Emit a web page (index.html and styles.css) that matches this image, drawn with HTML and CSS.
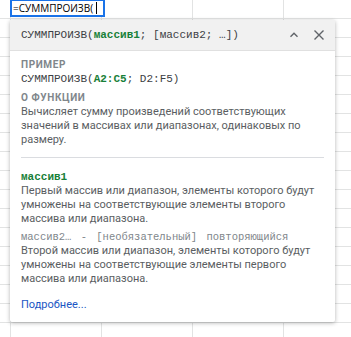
FILE: index.html
```html
<!DOCTYPE html>
<html lang="ru">
<head>
    <meta charset="UTF-8">
    <title>СУММПРОИЗВ</title>
    <link rel="stylesheet" href="styles.css">
</head>
<body>

    <!-- Sheet with an open formula editor -->
    <div class="sheet">
        <div class="cell-editor">=СУММПРОИЗВ(<span class="caret"></span></div>

        <!-- Function help popup -->
        <div class="help-popup">
            <div class="help-header">
                <div class="signature">СУММПРОИЗВ(<b class="arg">массив1</b>; [массив2; …])</div>
                <div class="header-icons">
                    <svg width="12" height="12" viewBox="0 0 12 12"><path d="M2.5 7.8 L6 4.3 L9.5 7.8" fill="none" stroke="#5f6368" stroke-width="1.4"/></svg>
                    <svg width="14" height="14" viewBox="0 0 14 14"><path d="M2.5 2.5 L11.5 11.5 M11.5 2.5 L2.5 11.5" fill="none" stroke="#5f6368" stroke-width="1.4"/></svg>
                </div>
            </div>

            <div class="help-body">
                <div class="label">Пример</div>
                <div class="mono">СУММПРОИЗВ(<b class="arg">A2:C5</b>; D2:F5)</div>
                <div class="label">О функции</div>
                <p class="desc">Вычисляет сумму произведений соответствующих значений в массивах или диапазонах, одинаковых по размеру.</p>

                <hr class="divider">

                <div class="mono arg-name"><b class="arg">массив1</b></div>
                <p class="desc">Первый массив или диапазон, элементы которого будут умножены на соответствующие элементы второго массива или диапазона.</p>

                <div class="mono optional">массив2… - [необязательный] повторяющийся</div>
                <p class="desc">Второй массив или диапазон, элементы которого будут умножены на соответствующие элементы первого массива или диапазона.</p>

                <a class="more" href="#">Подробнее...</a>
            </div>
        </div>
    </div>

</body>
</html>
```

FILE: styles.css
```css
/* Page + spreadsheet grid */
body {
    margin: 0;
    font-family: Roboto, 'Liberation Sans', sans-serif;
    background-color: #ffffff;
    background-image:
        linear-gradient(to right, #e2e3e3 1px, transparent 1px),
        linear-gradient(to bottom, #e2e3e3 1px, transparent 1px);
    background-size: 91px 100%, 100% 19px;
    background-position: 10px 0, 0 18px;
    height: 337px;
    overflow: hidden;
}

.sheet {
    padding-left: 10px;
}

/* Cell in edit mode */
.cell-editor {
    box-sizing: border-box;
    width: 95px;
    height: 18px;
    margin-top: -1px;
    border: 2px solid #1a73e8;
    background: #ffffff;
    font-family: 'Open Sans', 'Liberation Sans', sans-serif;
    font-size: 10px;
    line-height: 14px;
    padding-left: 1px;
    color: #000;
    white-space: nowrap;
}

.caret {
    display: inline-block;
    width: 1px;
    height: 12px;
    background: #000;
    vertical-align: -2px;
    margin-left: 3px;
}

/* Help popup */
.help-popup {
    width: 325px;
    margin-top: 3px;
    background: #ffffff;
    border-radius: 2px;
    box-shadow: 0 1px 4px rgba(0,0,0,0.3);
}

.help-header {
    display: flex;
    align-items: center;
    justify-content: space-between;
    height: 30px;
    padding: 0 9px 0 11px;
    background: #f1f1f1;
    border-bottom: 1px solid #e0e0e0;
}

.signature {
    font-family: 'Liberation Mono', monospace;
    font-size: 11px;
    color: #3c4043;
    white-space: nowrap;
}

.header-icons {
    display: flex;
    align-items: center;
    gap: 12px;
}

.arg {
    color: #188038;
    font-weight: bold;
}

.help-body {
    padding: 7px 11px 10px 11px;
}

.label {
    font-size: 10px;
    font-weight: bold;
    color: #80868b;
    text-transform: uppercase;
    letter-spacing: 0.6px;
    line-height: 14px;
}

.mono {
    font-family: 'Liberation Mono', monospace;
    font-size: 11px;
    line-height: 14px;
    color: #3c4043;
    margin-bottom: 5px;
}

.desc {
    margin: 0 0 4px 0;
    font-size: 11px;
    line-height: 14px;
    color: #5a5e62;
}

.divider {
    border: 0;
    border-top: 1px solid #dadce0;
    margin: 10px 0 12px 0;
}

.arg-name {
    margin-bottom: 0;
}

.optional {
    font-size: 10.5px;
    word-spacing: 3px;
    color: #80868b;
    margin-bottom: 0;
}

.more {
    display: block;
    margin-top: 12px;
    font-size: 11px;
    line-height: 14px;
    color: #1a56c4;
    text-decoration: none;
}
```
